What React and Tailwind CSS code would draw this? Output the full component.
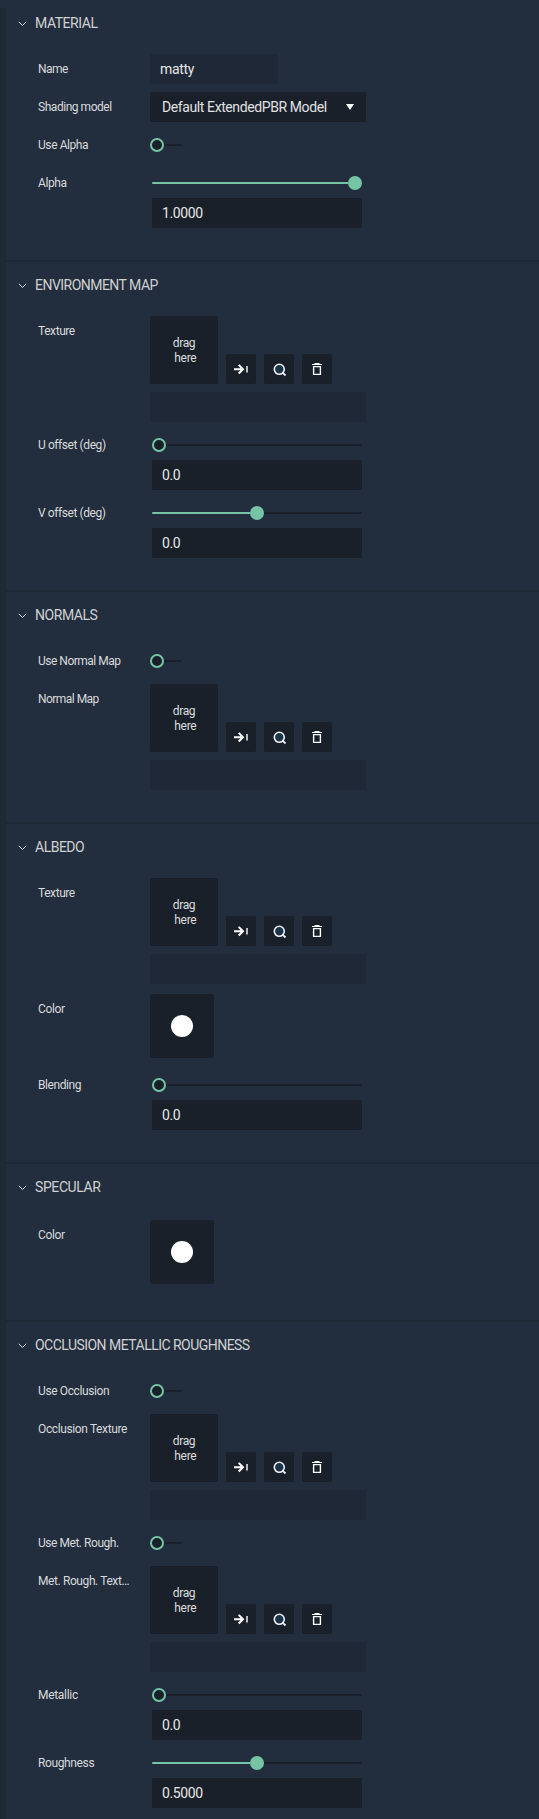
import React from 'react';

function Chevron() {
  return (
    <svg width="10" height="6" viewBox="0 0 10 6" fill="none" className="mt-px shrink-0">
      <path d="M0.8 0.8L4.5 4.5L8.2 0.8" stroke="#d6d9dd" strokeWidth="1" />
    </svg>
  );
}

function Section({ title, tracking = 'tracking-[-0.45px]', children }) {
  return (
    <section className="border-b-2 border-[#1e2936] pb-8">
      <h2 className={`flex h-[46px] items-center gap-[7px] pl-3 text-[14px] leading-5 text-[#cfd1d2] ${tracking}`}>
        <Chevron />
        {title}
      </h2>
      <div className="flex flex-col gap-2 pt-2">{children}</div>
    </section>
  );
}

function Row({ label, tracking = 'tracking-[-0.42px]', className = '', children }) {
  return (
    <div className={`flex pl-8 ${className}`}>
      <div className={`mr-[18px] w-[94px] shrink-0 truncate text-[12px] leading-[30px] text-[#d8dadc] ${tracking}`}>{label}</div>
      {children}
    </div>
  );
}

function Toggle() {
  return (
    <div className="flex h-[30px] items-center">
      <div className="size-3.5 rounded-full border-2 border-[#74c4a5] bg-[#19202a]" />
      <div className="h-0.5 w-[18px] rounded-r-[1px] bg-[#19202a]" />
    </div>
  );
}

function Slider({ fill, value }) {
  return (
    <div className="ml-0.5 w-[210px]">
      <div className="flex h-[30px] items-center">
        {fill > 0 && <div className="h-0.5 rounded-l-[1px] bg-[#74c4a5]" style={{ width: fill * 196 }} />}
        <div className={fill > 0 ? 'size-3.5 shrink-0 rounded-full bg-[#74c4a5]' : 'size-3.5 shrink-0 rounded-full border-2 border-[#74c4a5] bg-[#19202a]'} />
        <div className="h-0.5 flex-1 rounded-r-[1px] bg-[#19202a]" />
      </div>
      <div className="h-[30px] bg-[#19202a] pl-2.5 text-[14px] leading-[30px] tracking-[-0.4px] text-[#e6e6e6]">{value}</div>
    </div>
  );
}

function IconButton({ children }) {
  return (
    <div className="size-[30px] rounded-[2px] bg-[#19202a]">
      <svg width="30" height="30" viewBox="0 0 30 30" fill="none">
        {children}
      </svg>
    </div>
  );
}

function Texture() {
  return (
    <div className="flex w-[216px] flex-col gap-2">
      <div className="flex items-end gap-2">
        <div className="flex size-[68px] items-center justify-center rounded-[2px] bg-[#19202a] pt-px text-center text-[12px] leading-[15px] tracking-[-0.35px] text-[#dcdddf]">
          <div>
            <div>drag</div>
            <div>{'\u00a0here'}</div>
          </div>
        </div>
        <IconButton>
          <path d="M8 15.2H16.5M12.7 10.9L17 15.2L12.7 19.5" stroke="#fff" strokeWidth="2" />
          <path d="M21 12V18.5" stroke="#e4e5e7" strokeWidth="1.6" />
        </IconButton>
        <IconButton>
          <circle cx="15.3" cy="15.3" r="5" fill="#1c3448" stroke="#eef1f3" strokeWidth="1.6" />
          <path d="M18.4 18.4L21.5 21.5" stroke="#eef1f3" strokeWidth="1.8" />
        </IconButton>
        <IconButton>
          <path d="M10 10.5H20M12.5 9.5H17.5" stroke="#fff" strokeWidth="1.2" />
          <path d="M11.6 12.6H18.4V20.4H11.6Z" stroke="#fff" strokeWidth="1.4" />
        </IconButton>
      </div>
      <div className="h-[30px] rounded-[1px] bg-[#1f2836]" />
    </div>
  );
}

function Color() {
  return (
    <div className="mb-1 flex size-16 items-center justify-center rounded-[3px] bg-[#19202a]">
      <div className="size-[22px] rounded-full bg-white" />
    </div>
  );
}

export default function App() {
  return (
    <div className="h-[1819px] w-full overflow-hidden bg-[#1e2936] font-['Roboto',sans-serif]">
      <div className="h-2 bg-[#222d3d]" />
      <div className="-mt-2 ml-1.5 h-[1819px] bg-[#222d3d]">
        <Section title="MATERIAL">
          <Row label="Name" tracking="tracking-[-0.5px]">
            <div className="h-[30px] w-32 rounded-[1px] bg-[#1f2836] pl-2.5 text-[14px] leading-[30px] tracking-[-0.3px] text-[#e6e6e6]">matty</div>
          </Row>
          <Row label="Shading model" tracking="tracking-[-0.46px]">
            <div className="flex h-[30px] w-[216px] items-center justify-between rounded-[2px] bg-[#19202a] pl-3 pr-3 text-[14px] leading-[30px] tracking-[-0.4px] text-[#e0e1e2]">
              Default ExtendedPBR Model
              <svg width="8" height="6" viewBox="0 0 8 6">
                <path d="M0 0H8L4 6Z" fill="#fff" />
              </svg>
            </div>
          </Row>
          <Row label="Use Alpha"><Toggle /></Row>
          <Row label="Alpha"><Slider fill={1} value="1.0000" /></Row>
        </Section>
        <Section title="ENVIRONMENT MAP" tracking="tracking-[-0.53px]">
          <Row label="Texture"><Texture /></Row>
          <Row label="U offset (deg)"><Slider fill={0} value="0.0" /></Row>
          <Row label="V offset (deg)"><Slider fill={0.5} value="0.0" /></Row>
        </Section>
        <Section title="NORMALS">
          <Row label="Use Normal Map" tracking="tracking-[-0.5px]"><Toggle /></Row>
          <Row label="Normal Map" tracking="tracking-[-0.54px]"><Texture /></Row>
        </Section>
        <Section title="ALBEDO" tracking="tracking-[-0.5px]">
          <Row label="Texture"><Texture /></Row>
          <Row label="Color" tracking="tracking-[-0.35px]" className="mt-0.5"><Color /></Row>
          <Row label="Blending"><Slider fill={0} value="0.0" /></Row>
        </Section>
        <Section title="SPECULAR" tracking="tracking-[-0.4px]">
          <Row label="Color" tracking="tracking-[-0.35px]" className="mt-0.5"><Color /></Row>
        </Section>
        <Section title="OCCLUSION METALLIC ROUGHNESS" tracking="tracking-[-0.53px]">
          <Row label="Use Occlusion" tracking="tracking-[-0.38px]"><Toggle /></Row>
          <Row label="Occlusion Texture" tracking="tracking-[-0.38px]"><Texture /></Row>
          <Row label="Use Met. Rough." tracking="tracking-[-0.46px]"><Toggle /></Row>
          <Row label="Met. Rough. Text…" tracking="tracking-[-0.4px]"><Texture /></Row>
          <Row label="Metallic" tracking="tracking-[-0.3px]"><Slider fill={0} value="0.0" /></Row>
          <Row label="Roughness" tracking="tracking-[-0.37px]"><Slider fill={0.5} value="0.5000" /></Row>
        </Section>
      </div>
    </div>
  );
}
